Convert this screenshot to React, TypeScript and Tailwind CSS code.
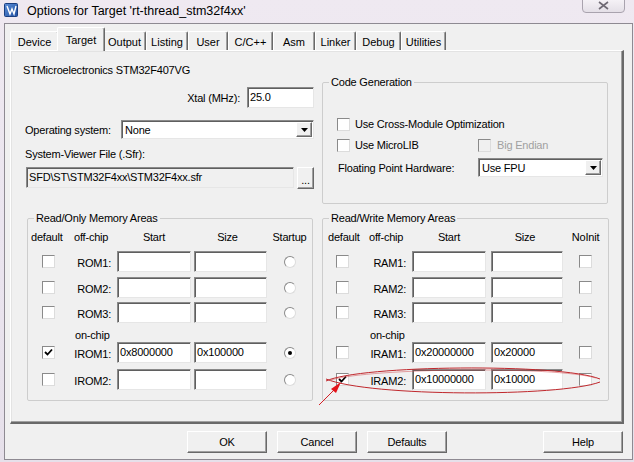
import React from "react";

const sunken =
  "border border-t-[#8a8a8a] border-l-[#8a8a8a] border-r-[#e6e6e6] border-b-[#e6e6e6] shadow-[inset_1px_1px_0_#5f5f5f]";
const raised =
  "border border-t-white border-l-white border-r-[#696969] border-b-[#696969] shadow-[inset_-1px_-1px_0_#a0a0a0]";

function TextBox({ w, value, className = "" }: { w: string; value?: string; className?: string }) {
  return (
    <div className={`${w} h-[21px] bg-white ${sunken} pl-[2px] pt-[2px] leading-[14px] whitespace-nowrap overflow-hidden ${className}`}>
      {value}
    </div>
  );
}

function Check({ checked = false, disabled = false }: { checked?: boolean; disabled?: boolean }) {
  return (
    <div
      className={`w-[13px] h-[13px] shrink-0 flex items-center justify-center border border-t-[#8a8a8a] border-l-[#8a8a8a] border-r-[#dcdcdc] border-b-[#dcdcdc] ${
        disabled ? "bg-[#f0f0f0]" : "bg-white"
      }`}
    >
      {checked && (
        <svg width="9" height="9" viewBox="0 0 9 9">
          <path d="M1 4 L3.5 6.5 L8 1.5" stroke="#000" strokeWidth="1.8" fill="none" />
        </svg>
      )}
    </div>
  );
}

function Radio({ checked = false }: { checked?: boolean }) {
  return (
    <div className="w-[12px] h-[12px] rounded-full border border-t-[#8a8a8a] border-l-[#8a8a8a] border-r-[#dcdcdc] border-b-[#dcdcdc] bg-white flex items-center justify-center">
      {checked && <div className="w-[4px] h-[4px] rounded-full bg-black" />}
    </div>
  );
}

function Select({ w, value }: { w: string; value: string }) {
  return (
    <div className={`${w} h-[19px] bg-white ${sunken} flex items-center`}>
      <span className="pl-[3px] flex-1 leading-[14px]">{value}</span>
      <div className={`w-[16px] h-[15px] mr-[1px] bg-[#f0f0f0] ${raised} flex items-center justify-center`}>
        <svg width="7" height="4" viewBox="0 0 7 4">
          <path d="M0 0 H7 L3.5 4 Z" fill="#000" />
        </svg>
      </div>
    </div>
  );
}

function Tab({ label, w, selected = false }: { label: string; w: string; selected?: boolean }) {
  if (selected) {
    return (
      <div
        className={`${w} h-[24px] -mx-[2px] mb-[-1px] relative z-10 bg-[#f0f0f0] border-t border-l border-white border-r border-r-[#696969] shadow-[inset_-1px_0_0_#a0a0a0] rounded-tl-[2px] rounded-tr-[2px] flex justify-center pt-[5px] leading-[14px]`}
      >
        {label}
      </div>
    );
  }
  return (
    <div
      className={`${w} h-[19px] bg-[#f0f0f0] border-t border-l border-white border-r border-r-[#696969] shadow-[inset_-1px_0_0_#a0a0a0] rounded-tl-[2px] rounded-tr-[2px] flex justify-center pt-[3px] leading-[14px]`}
    >
      {label}
    </div>
  );
}

function Group({
  title,
  className,
  children,
}: {
  title: string;
  className: string;
  children: React.ReactNode;
}) {
  return (
    <fieldset className={`border border-[#cdcdcd] rounded-[2px] ${className}`}>
      <legend className="ml-[6px] px-[2px] leading-[14px]">{title}</legend>
      {children}
    </fieldset>
  );
}

type Row = { label: string; checked?: boolean; start?: string; size?: string; last?: boolean };

function MemGroup({
  title,
  lastHeader,
  rows,
  onRows,
  radio,
  in2w,
  in2ml,
  aPad,
  sizeShift,
}: {
  title: string;
  lastHeader: string;
  rows: Row[];
  onRows: Row[];
  radio: boolean;
  in2w: string;
  in2ml: string;
  aPad: string;
  sizeShift: string;
}) {
  const renderRow = (r: Row, mt: string) => (
    <div key={r.label} className={`flex items-center h-[21px] ${mt}`}>
      <div className={`w-[40px] ${aPad}`}>
        <Check checked={r.checked} />
      </div>
      <div className="w-[43px] text-right leading-[14px] pt-[2px]">{r.label}</div>
      <TextBox w="w-[74px]" value={r.start} className="ml-[6px]" />
      <TextBox w={in2w} value={r.size} className={in2ml} />
      <div className="flex-1 flex justify-center">{radio ? <Radio checked={r.last} /> : <Check />}</div>
    </div>
  );
  return (
    <Group title={title} className={`h-[190px] ${radio ? "w-[286px]" : "w-[287px]"}`}>
      <div className="flex leading-[14px] mt-[5px]">
        <div className={`w-[40px] ${radio ? "pl-[3px]" : "pl-[5px]"}`}>default</div>
        <div className="w-[43px] pl-[6px]">off-chip</div>
        <div className="w-[74px] ml-[6px] text-center">Start</div>
        <div className={`${in2w} ${in2ml} text-center ${sizeShift}`}>Size</div>
        <div className="flex-1 text-center">{lastHeader}</div>
      </div>
      {renderRow(rows[0], "mt-[7px]")}
      {renderRow(rows[1], "mt-[5px]")}
      {renderRow(rows[2], "mt-[4px]")}
      <div className="mt-[5px] pl-[47px] leading-[14px]">on-chip</div>
      {renderRow(onRows[0], "mt-0")}
      {renderRow(onRows[1], "mt-[6px]")}
    </Group>
  );
}

function Button({ label }: { label: string }) {
  return (
    <div className={`w-[80px] h-[22px] bg-[#f0f0f0] ${raised} flex items-center justify-center leading-[14px]`}>
      {label}
    </div>
  );
}

export default function App() {
  return (
    <div className="relative w-[634px] h-[462px] overflow-hidden bg-gradient-to-b from-[#efe9f1] via-[#ebe5ef] to-[#e6e0ea] font-['Liberation_Sans',Arial,sans-serif] text-[11px] tracking-[-0.2px] text-black">
      {/* Title bar */}
      <div className="flex h-[23px] items-start">
        <svg className="ml-[4px] mt-[3px]" width="14" height="14" viewBox="0 0 14 14">
          <defs>
            <linearGradient id="ig" x1="0" y1="0" x2="1" y2="1">
              <stop offset="0" stopColor="#5d8fd6" />
              <stop offset="1" stopColor="#1f4fa3" />
            </linearGradient>
          </defs>
          <rect x="0.5" y="0.5" width="13" height="13" rx="1" fill="url(#ig)" stroke="#1a3f80" />
          <path d="M3 3 L6 11 L8 6 L10 11 L12 3" stroke="#fff" strokeWidth="1.4" fill="none" />
        </svg>
        <span className="ml-[9px] mt-[3px] text-[12.5px] tracking-normal leading-[16px] text-black">
          Options for Target 'rt-thread_stm32f4xx'
        </span>
        <div className="ml-auto mr-[9px] mt-[-2px] w-[43px] h-[15px] rounded-b-[4px] border border-[#a9a3ae] bg-gradient-to-b from-[#f6f3f7] to-[#e4dfe7] flex items-center justify-center">
          <svg width="11" height="9" viewBox="0 0 11 9">
            <path d="M1 1 L10 8 M10 1 L1 8" stroke="#6f6a74" strokeWidth="1.6" />
          </svg>
        </div>
      </div>

      {/* Client area */}
      <div className="ml-[4px] w-[629px] h-[437px] border border-[#8e8a92] bg-[#f0f0f0] flex flex-col">
        {/* Tabs */}
        <div className="ml-[5px] mt-[3px] h-[23px] flex items-end tracking-normal">
          <Tab label="Device" w="w-[49px]" />
          <Tab label="Target" w="w-[48px]" selected />
          <Tab label="Output" w="w-[43px]" />
          <Tab label="Listing" w="w-[42px]" />
          <Tab label="User" w="w-[40px]" />
          <Tab label="C/C++" w="w-[45px]" />
          <Tab label="Asm" w="w-[42px]" />
          <Tab label="Linker" w="w-[41px]" />
          <Tab label="Debug" w="w-[45px]" />
          <Tab label="Utilities" w="w-[45px]" />
        </div>

        {/* Panel */}
        <div className="ml-[5px] w-[614px] h-[374px] border-t border-l border-white border-r-2 border-b-2 border-r-[#696969] border-b-[#696969] shadow-[inset_-1px_-1px_0_#a0a0a0,inset_1px_1px_0_#e3e3e3]">
          <div className="flex">
            {/* Left column */}
            <div className="ml-[12px] w-[291px] flex flex-col">
              <div className="mt-[12px] leading-[14px]">STMicroelectronics STM32F407VG</div>
              <div className="mt-[10px] h-[21px] flex items-center justify-end">
                <span className="leading-[14px] mr-[7px]">Xtal (MHz):</span>
                <TextBox w="w-[67px]" value="25.0" />
              </div>
              <div className="mt-[12px] h-[19px] flex items-center">
                <span className="pl-[2px] leading-[14px]">Operating system:</span>
                <div className="ml-auto">
                  <Select w="w-[193px]" value="None" />
                </div>
              </div>
              <div className="mt-[8px] pl-[2px] leading-[14px]">System-Viewer File (.Sfr):</div>
              <div className="mt-[6px] flex items-start">
                <div className={`ml-[3px] w-[269px] h-[21px] bg-[#f0f0f0] ${sunken} pl-[2px] pt-[2px] leading-[14px]`}>
                  SFD\ST\STM32F4xx\STM32F4xx.sfr
                </div>
                <div className={`ml-[3px] w-[17px] h-[22px] bg-[#f0f0f0] ${raised} flex items-end justify-center pb-[3px] leading-[10px]`}>
                  ...
                </div>
              </div>
            </div>

            {/* Right column */}
            <div className="ml-[8px] mt-[24px]">
              <Group title="Code Generation" className="w-[286px] h-[129px]">
                <div className="mt-[28px] h-[14px] flex items-center pl-[14px]">
                  <Check />
                  <span className="ml-[5px] leading-[14px]">Use Cross-Module Optimization</span>
                </div>
                <div className="mt-[7px] h-[14px] flex items-center">
                  <div className="w-[155px] pl-[14px] flex items-center">
                    <Check />
                    <span className="ml-[5px] leading-[14px]">Use MicroLIB</span>
                  </div>
                  <Check disabled />
                  <span className="ml-[6px] leading-[14px] text-[#a0a0a0]">Big Endian</span>
                </div>
                <div className="mt-[6px] h-[19px] flex items-center">
                  <div className="w-[155px] pl-[15px] leading-[14px]">Floating Point Hardware:</div>
                  <Select w="w-[125px]" value="Use FPU" />
                </div>
              </Group>
            </div>
          </div>

          {/* Memory groups */}
          <div className="mt-[7px] flex">
            <div className="ml-[16px]">
              <MemGroup
                title="Read/Only Memory Areas"
                lastHeader="Startup"
                radio
                in2w="w-[73px]"
                in2ml="ml-[3px]"
                aPad="pl-[14px]"
                sizeShift="pr-[6px]"
                rows={[{ label: "ROM1:" }, { label: "ROM2:" }, { label: "ROM3:" }]}
                onRows={[
                  { label: "IROM1:", checked: true, start: "0x8000000", size: "0x100000", last: true },
                  { label: "IROM2:" },
                ]}
              />
            </div>
            <div className="ml-[9px]">
              <MemGroup
                title="Read/Write Memory Areas"
                lastHeader="NoInit"
                radio={false}
                in2w="w-[72px]"
                in2ml="ml-[5px]"
                aPad="pl-[13px]"
                sizeShift="pr-[4px]"
                rows={[{ label: "RAM1:" }, { label: "RAM2:" }, { label: "RAM3:" }]}
                onRows={[
                  { label: "IRAM1:", start: "0x20000000", size: "0x20000" },
                  { label: "IRAM2:", checked: true, start: "0x10000000", size: "0x10000" },
                ]}
              />
            </div>
          </div>
        </div>

        {/* Buttons */}
        <div className="mt-[7px] flex">
          <div className="ml-[182px] flex gap-[10px]">
            <Button label="OK" />
            <Button label="Cancel" />
            <Button label="Defaults" />
          </div>
          <div className="ml-[96px]">
            <Button label="Help" />
          </div>
        </div>
      </div>

      {/* Red annotation overlay */}
      <svg className="absolute left-0 top-0 pointer-events-none" width="634" height="462" viewBox="0 0 634 462">
        <path d="M326 381 C360 365 560 363 600 379" stroke="#c0282d" strokeWidth="1" fill="none" />
        <path d="M326 379 C370 397 560 397 600 382" stroke="#c0282d" strokeWidth="1" fill="none" />
        <path d="M331 380 C370 368 555 366 596 378" stroke="#d0464a" strokeWidth="0.7" fill="none" opacity="0.7" />
        <path d="M319 405 L336 388" stroke="#d32027" strokeWidth="1" />
        <path d="M341 382 L331 389 L336 393 Z" fill="#e3141b" />
      </svg>
    </div>
  );
}
